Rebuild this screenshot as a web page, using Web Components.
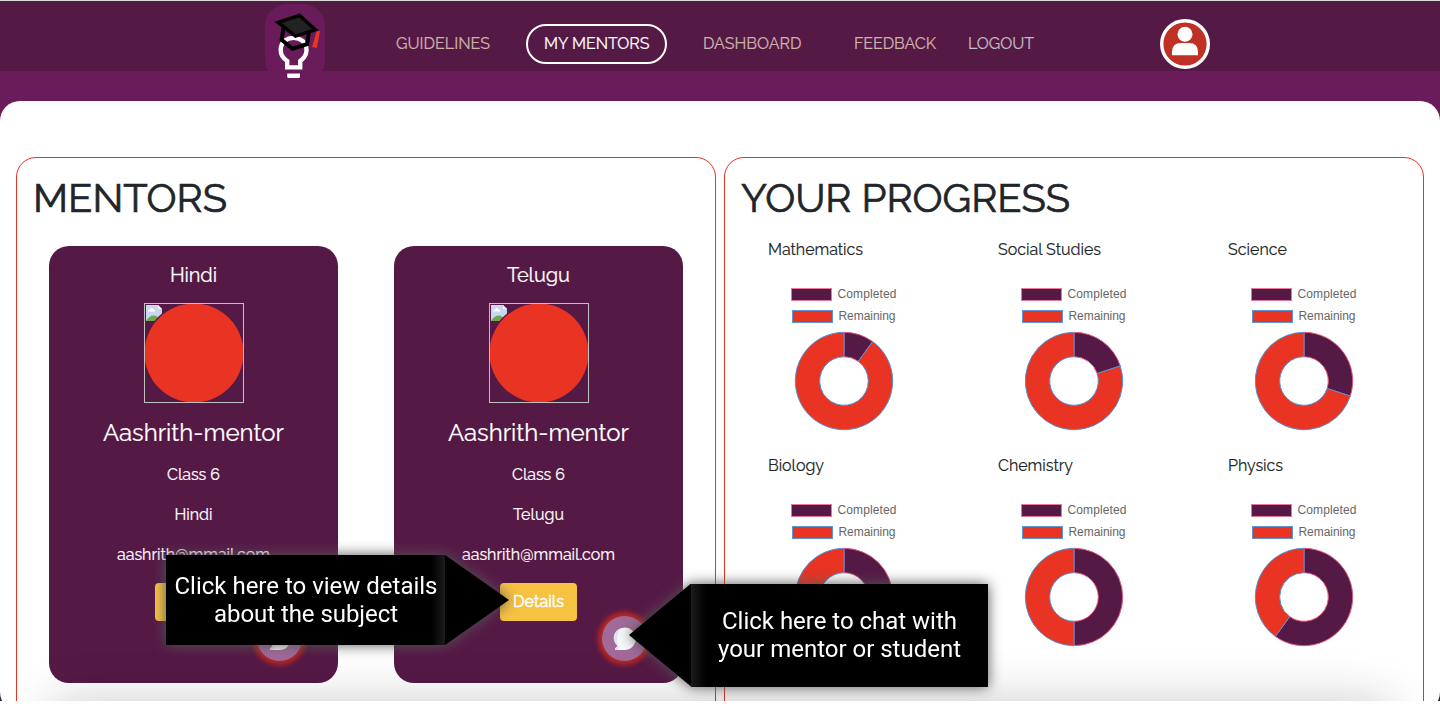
<!DOCTYPE html>
<html lang="en"><head><meta charset="utf-8"><title>My Mentors</title>
<style>html,body{margin:0;background:#fff;height:708px;overflow:hidden}</style></head>
<body><mentor-app></mentor-app>
<script>
const define=(name,html,setup)=>customElements.define(name,class extends HTMLElement{
  connectedCallback(){
    if(this.shadowRoot)return;
    const t=document.createElement('template');
    t.innerHTML=typeof html==='function'?html(this):html;
    this.attachShadow({mode:'open'}).append(t.content.cloneNode(true));
    if(setup)setup(this);
  }
});

/* A single line of text, tracked so that it fills the width in its w attribute */
define('fit-text',e=>`<style>:host{display:inline-block;white-space:nowrap;width:${e.getAttribute('w')}px;text-align:left;flex:none}span{display:inline-block}</style><span><slot></slot></span>`,e=>{
  const s=e.shadowRoot.querySelector('span');
  const n=e.textContent.length,w=+e.getAttribute('w');
  s.style.letterSpacing=((w-s.getBoundingClientRect().width)/(n-1)).toFixed(3)+'px';
});

define('app-logo',`<style>:host{display:block;width:60px;height:76px}svg{display:block;overflow:visible}</style>
<svg width="60" height="76" viewBox="265 4 60 76">
<rect x="265" y="4" width="60" height="78" rx="22" fill="#691b5a"/>
<path d="M287.200 67.400V61C282.500 58 280.700 54.500 280.700 50C280.700 42.500 286 37.900 293.500 37.900S306.500 42.500 306.500 50C306.500 54.500 304.500 58 300.200 61V67.400Z" fill="none" stroke="#fff" stroke-width="4.400"/>
<path d="M287.200 73.400H300V76.500Q300 78 298.500 78H288.700Q287.200 78 287.200 76.500Z" fill="#fff"/>
<path d="M283.500 28L281.600 39.800L292.500 48.700L307 44.200L308.800 33" fill="none" stroke="#000" stroke-width="4"/>
<path d="M278 22.300L299.500 15.500L315.500 29.800L295.500 36Z" fill="#222" stroke="#000" stroke-width="3.400"/>
<path d="M316.700 31L320 31L317 48L312 47Z" fill="#e93323"/></svg>`);

define('user-avatar',`<style>:host{display:block;width:50px;height:50px}svg{display:block}</style>
<svg width="50" height="50"><circle cx="25" cy="25" r="23.300" fill="#c13025" stroke="#fff" stroke-width="3.400"/><circle cx="25" cy="15.200" r="7.500" fill="#fff"/><path d="M12 36.300V33Q12 24 21 24H29Q38 24 38 33V36.300Z" fill="#fff"/></svg>`);

define('nav-bar',`<style>
:host{display:flex;height:70px;background:#551946;color:#cfb3ab;font-size:16px;line-height:24px;-webkit-text-stroke:.2px currentColor}
app-logo{margin:3px 0 0 265px}
nav{display:flex;align-items:center;height:40px;margin:23px 0 0 71px}
.active{box-sizing:border-box;width:141px;height:40px;border:2px solid #fff;border-radius:20px;color:#fff;display:flex;align-items:center;padding-left:16px;margin:0 36px}
.d{margin-right:52.500px}.f{margin-right:32px}.l{color:#c3bcc4}
user-avatar{margin:18px 0 0 126px}</style>
<app-logo></app-logo><nav><fit-text w="94">GUIDELINES</fit-text><div class="active"><fit-text w="105.5">MY MENTORS</fit-text></div><fit-text class="d" w="98.5">DASHBOARD</fit-text><fit-text class="f" w="82">FEEDBACK</fit-text><fit-text class="l" w="66">LOGOUT</fit-text></nav><user-avatar></user-avatar>`);

define('section-panel',`<style>:host{display:block;box-sizing:border-box;width:700px;height:620px;border:1px solid #e93323;border-radius:20px;padding:16px}
h1{margin:0;font-size:40px;line-height:48px;font-weight:400;color:#212529;-webkit-text-stroke:.7px #212529}</style><h1><slot name="title"></slot></h1><slot></slot>`);

define('mentor-photo',`<style>:host{display:block;width:100px;height:100px}svg{display:block}</style>
<svg width="100" height="100"><path d="M2 2H14L18 6V18H2Z" fill="#c9d8f2"/><path d="M2 18Q9 7 18 18Z" fill="#70a84e"/><path d="M4 8.500Q4 6.500 6 6.500Q7.500 3.500 9.500 6.500Q12 7 11 8.500Z" fill="#fff"/><path d="M14 2V6H18Z" fill="#f5f7fa"/><circle cx="50" cy="50" r="50.800" fill="#551946"/><circle cx="50" cy="50" r="49.500" fill="#e93323"/><rect x=".5" y=".5" width="99" height="99" fill="none" stroke="#c0c0c0"/></svg>`);

define('chat-button',`<style>:host{display:block;width:45px;height:45px;border-radius:50%;background:#a16a99;box-shadow:0 0 5px 4px #b92822}svg{display:block}</style>
<svg width="45" height="45"><path d="M22.500 11.500A11.200 11.200 0 1 1 22.500 34H13V32.500L15.500 30A11.200 11.200 0 0 1 22.500 11.500Z" fill="#f8f8fa"/><path d="M20 11.800C14 16 14 28 17 31.500L15 34H13V32.500L15.500 30C9 24 11 14 20 11.800Z" fill="#e3e3ee"/></svg>`);

define('mentor-card',e=>{const a=k=>e.getAttribute(k);return `<style>
:host{display:flex;flex-direction:column;align-items:center;box-sizing:border-box;width:289px;height:437px;background:#551946;border-radius:20px;color:#fff;padding-top:17px;font-size:16px;line-height:24px;-webkit-text-stroke:.2px #fff}
.subject{font-size:20px;margin-bottom:16px}.name{font-size:24px;line-height:28px;margin:16px 0 16px}
p{margin:0 0 16px}
.btn{width:77px;height:38px;border-radius:4px;background:#f5c242;display:flex;align-items:center;justify-content:center;-webkit-text-stroke:.5px #fff}
chat-button{align-self:flex-end;margin:-5px 36px 0 0}</style>
<div class="subject"><fit-text w="${a('sw')}">${a('subject')}</fit-text></div><mentor-photo></mentor-photo>
<div class="name"><fit-text w="181">Aashrith-mentor</fit-text></div><p><fit-text w="53">Class 6</fit-text></p><p><fit-text w="${a('pw')}">${a('subject')}</fit-text></p><p><fit-text w="153">aashrith@mmail.com</fit-text></p>
<div class="btn">${a('action')?`<fit-text w="51">${a('action')}</fit-text>`:''}</div><chat-button></chat-button>`});

define('progress-chart',e=>{
 const v=+e.getAttribute('value'),a=v*Math.PI/50,s=Math.sin(a),c=-Math.cos(a),P=(r)=>`${50+r*s} ${50+r*c}`,R=48.7,r=24.3;
 const done=`M50 ${50-R}A${R} ${R} 0 ${v>50?1:0} 1 ${P(R)}L${P(r)}A${r} ${r} 0 ${v>50?1:0} 0 50 ${50-r}Z`;
 const rest=`M${P(R)}A${R} ${R} 0 ${v<50?1:0} 1 50 ${50-R}V${50-r}A${r} ${r} 0 ${v<50?1:0} 0 ${P(r)}Z`;
 return `<style>:host{display:block;height:216px;width:230px;color:#212529;font-size:16px;line-height:24px}
header{height:24px;padding-top:1px;-webkit-text-stroke:.15px #212529}
.legend{margin:21px 0 0 23px;font:12px/22px "Liberation Sans",Arial,sans-serif;color:#666}
.legend div{display:flex;align-items:center;height:22px}.legend div+div{padding-left:1px}
i{box-sizing:border-box;width:41px;height:13px;margin-right:5.500px;background:#551946;border:1px solid #e8789a}.r i{background:#e93323;border-color:#5c96d8}
svg{display:block;margin:4px 0 0 26px}</style>
<header><fit-text w="${e.getAttribute('w')}">${e.getAttribute('name')}</fit-text></header>
<div class="legend"><div><i></i><fit-text w="59">Completed</fit-text></div><div class="r"><i></i><fit-text w="57">Remaining</fit-text></div></div>
<svg width="100" height="100"><path d="${done}" fill="#551946" stroke="#e8587c"/><path d="${rest}" fill="#e93323" stroke="#4d93d6"/></svg>`});

define('hint-callout',`<style>
:host{display:block;filter:drop-shadow(0 0 7px #555)}
.box{box-sizing:border-box;height:100%;background:#000;color:#fff;font:24px/28px Roboto,sans-serif;display:flex;flex-direction:column;align-items:center;justify-content:center}
.arrow{position:absolute;top:0;height:100%;background:#000}
:host([side=right]) .box{background:linear-gradient(90deg,#000 95%,#1c1c1c);padding-left:1px}
:host([side=left]) .box{background:linear-gradient(270deg,#000 95%,#1c1c1c);padding-bottom:1px}
:host([side=right]) .arrow{left:100%;width:64px;clip-path:polygon(0 0,100% 50%,0 100%)}
:host([side=left]) .arrow{right:100%;width:62px;clip-path:polygon(100% 0,0 50%,100% 100%)}
</style><div class="box"><slot></slot></div><div class="arrow"></div>`);

define('mentor-app',`<style>
:host{display:block;position:relative;height:701px;overflow:hidden;box-sizing:border-box;border-top:1px solid #dcdcdc;background:linear-gradient(#691b5a 400px,transparent 400px),linear-gradient(90deg,#1d2b45 50%,#3a1530 50%);font-family:Raleway,Lato,sans-serif}
main{margin-top:30px;height:611px;background:#fff;border-radius:20px;box-sizing:border-box;padding:56px 16px 0;display:flex;gap:8px}
.cards{display:flex;gap:56px;margin:24px 0 0 16px}
.charts{display:grid;grid-template-columns:repeat(3,230px);margin:15px 0 0 27px}
.fade{position:absolute;left:70px;right:70px;top:720px;height:40px;box-shadow:0 0 50px 20px rgba(0,0,0,.2)}
hint-callout{position:absolute}
.view{left:166px;top:554px;width:279px;height:90px}.chat{left:691px;top:582.500px;width:297px;height:103px}
</style><nav-bar></nav-bar><main>
<section-panel><fit-text slot="title" w="194">MENTORS</fit-text><div class="cards"><mentor-card subject="Hindi" sw="47" pw="38"></mentor-card><mentor-card subject="Telugu" sw="63" pw="51" action="Details"></mentor-card></div></section-panel>
<section-panel><fit-text slot="title" w="329">YOUR PROGRESS</fit-text><div class="charts">
<progress-chart value="10" w="95" name="Mathematics"></progress-chart><progress-chart value="20" w="103" name="Social Studies"></progress-chart><progress-chart value="30" w="59" name="Science"></progress-chart>
<progress-chart value="50" w="56" name="Biology"></progress-chart><progress-chart value="50" w="75" name="Chemistry"></progress-chart><progress-chart value="60" w="55" name="Physics"></progress-chart></div></section-panel></main>
<div class="fade"></div>
<hint-callout class="view" side="right"><fit-text w="263">Click here to view details</fit-text><fit-text w="184">about the subject</fit-text></hint-callout>
<hint-callout class="chat" side="left"><fit-text w="235">Click here to chat with</fit-text><fit-text w="243">your mentor or student</fit-text></hint-callout>`);
</script></body></html>
